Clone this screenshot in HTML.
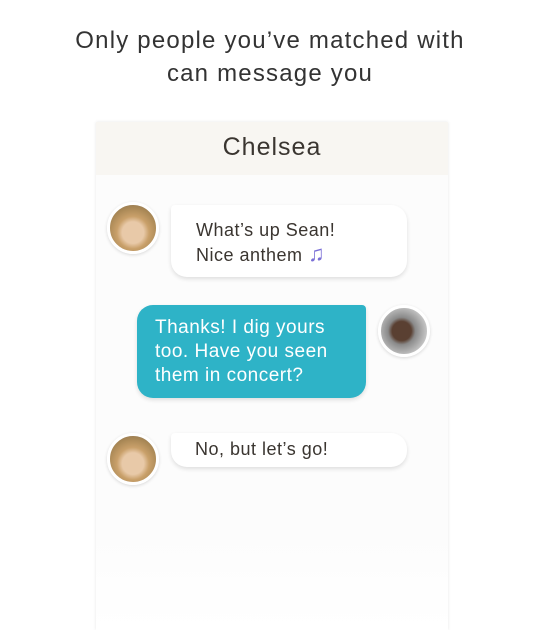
<!DOCTYPE html>
<html><head><style>
body{margin:0;width:540px;height:630px;background:#fff;font-family:"Liberation Sans",sans-serif;position:relative;overflow:hidden}
.t{position:absolute;top:24px;left:0;width:540px;text-align:center;font-size:24px;line-height:33px;color:#333;letter-spacing:1.2px}
.card{position:absolute;left:96px;top:122px;width:352px;height:508px;background:linear-gradient(#fcfcfc 80%,#fff);box-shadow:0 0 3px rgba(0,0,0,.1)}
.hd{height:53px;background:#f8f6f2;text-align:center;font-size:25px;line-height:50px;color:#3a3530;letter-spacing:1px}
.b{position:absolute;background:#fff;border-radius:16px;box-shadow:0 2px 4px rgba(0,0,0,.12);font-size:18px;line-height:24px;color:#3a3530;box-sizing:border-box;letter-spacing:.5px}
.av{position:absolute;width:46px;height:46px;border-radius:50%;border:3px solid #fff;box-shadow:0 1px 3px rgba(0,0,0,.15)}
.f{background:radial-gradient(circle at 50% 60%,#e8c9a8 0 30%,#c9a06a 45%,#a88755 70%,#7d6a55)}
.m{background:radial-gradient(circle at 45% 50%,#5a4032 0 28%,#8a8a8a 40%,#c8c8c8 75%)}
</style></head><body>
<div class="t">Only people you’ve matched with<br>can message you</div>
<div class="card"><div class="hd">Chelsea</div></div>
<div class="av f" style="left:107px;top:202px"></div>
<div class="b" style="left:171px;top:205px;width:236px;height:72px;padding:13px 25px;border-top-left-radius:4px">What’s up Sean!<br>Nice anthem <span style="color:#7a6fd6;font-size:22px">♫</span></div>
<div class="b" style="left:137px;top:305px;width:229px;height:93px;padding:11px 18px;background:#2eb3c7;color:#fff;border-top-right-radius:4px;font-size:19px">Thanks! I dig yours<br>too. Have you seen<br>them in concert?</div>
<div class="av m" style="left:378px;top:305px"></div>
<div class="av f" style="left:107px;top:433px"></div>
<div class="b" style="left:171px;top:433px;width:236px;height:34px;padding:4px 24px;border-top-left-radius:4px">No, but let’s go!</div>
</body></html>
